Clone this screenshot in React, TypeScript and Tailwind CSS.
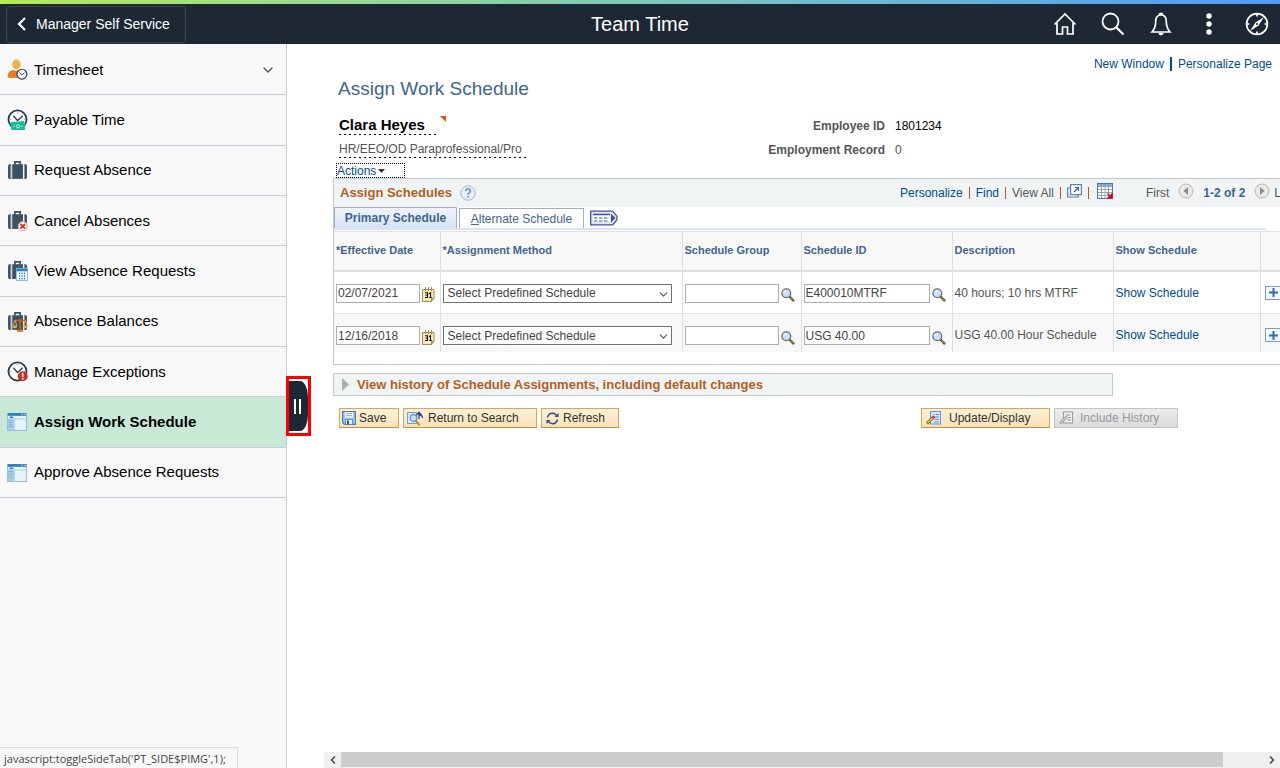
import { useState, type ReactNode } from "react";
import { ChevronDown, ChevronLeft, ChevronRight } from "lucide-react";

const Clock = () => (
  <>
    <circle cx="10" cy="10" r="8.6" fill="#fff" stroke="#2b3e50" strokeWidth="1.7" />
    <path d="M6 6.5l4 4.5 5-4.5" fill="none" stroke="#2b3e50" strokeWidth="1.3" />
    <path d="M10 3v1M3 10h1M16 10h1" stroke="#8b98a5" strokeWidth="1" />
  </>
);

const Suitcase = () => (
  <>
    <path d="M7.5 4.500v-2.700h5v2.700" fill="none" stroke="#3c5064" strokeWidth="1.6" />
    <rect x="5" y="4" width="10.200" height="14" fill="#3c5064" />
    <path d="M4 4v14H2.500Q1 18 1 16.500v-11Q1 4 2.500 4zM16.300 4v14h1.300q1.400 0 1.400-1.500v-11Q19 4 17.600 4z" fill="#3c5064" />
    <path d="M3.500 4.500v13M16.700 4.500v13" stroke="#9aa6b1" strokeWidth=".8" />
  </>
);

const Windowed = () => (
  <>
    <rect x="0" y="2" width="19" height="17" fill="#a9cfe6" />
    <rect x="0" y="2" width="19" height="2.500" fill="#2980b9" />
    <path d="M14 3.200h1M16.500 3.200h1" stroke="#d6e9f5" />
    <rect x="1" y="5" width="17" height="2" fill="#f4fafd" />
    <path d="M2.500 6h3.500" stroke="#2980b9" strokeWidth="1.500" />
    <path d="M1.500 9h4M1.500 11h4M1.500 13h4M1.500 15h4" stroke="#7db6da" strokeWidth=".9" />
    <rect x="7.500" y="8" width="10.500" height="10" fill="#e8f3f9" />
    <path d="M.4 2v16.600h18.200V2" fill="none" stroke="#8dbfdd" strokeWidth=".8" />
  </>
);

const navItems: { label: string; art: ReactNode; expandable?: boolean; active?: boolean }[] = [
  {
    label: "Timesheet",
    expandable: true,
    art: (
      <>
        <ellipse cx="9" cy="5.200" rx="4" ry="4.800" fill="#e9b44c" />
        <path d="M.5 17q0-5.500 5-6.500 3.500 1.500 7 0 3 1 3.500 3v4.500H3.500Q.5 18 .5 17z" fill="#e67e22" />
        <circle cx="14.200" cy="14.500" r="4.700" fill="#fff" stroke="#2b3e50" strokeWidth="1.100" />
        <path d="M11.700 13l2.500 2 2.500-2" fill="none" stroke="#2b3e50" strokeWidth=".9" />
      </>
    ),
  },
  {
    label: "Payable Time",
    art: (
      <>
        <Clock />
        <path d="M3 12.500l13.500-1v2.500h.5v6H4v-5H3z" fill="#1abc9c" />
        <circle cx="10.500" cy="16.500" r="1.500" fill="none" stroke="#c9f3ea" strokeWidth=".9" />
        <path d="M6 16.500h1.500M13.500 16.500H15" stroke="#c9f3ea" />
      </>
    ),
  },
  { label: "Request Absence", art: <Suitcase /> },
  {
    label: "Cancel Absences",
    art: (
      <>
        <Suitcase />
        <circle cx="15" cy="15.500" r="4.300" fill="#fff" stroke="#d9a09a" />
        <path d="M12.800 13.300l4.400 4.400M17.200 13.300l-4.400 4.400" stroke="#c0392b" strokeWidth="1.800" />
      </>
    ),
  },
  {
    label: "View Absence Requests",
    art: (
      <>
        <Suitcase />
        <rect x="9" y="8" width="10.500" height="11.500" fill="#fff" stroke="#8fc1e0" />
        <path d="M9 9.500h10.500" stroke="#2980b9" strokeWidth="2.500" />
        <path d="M12 12v7M14.300 12v7M16.600 12v7" stroke="#2980b9" strokeWidth="1.200" strokeDasharray="1.500 1" />
      </>
    ),
  },
  {
    label: "Absence Balances",
    art: (
      <>
        <Suitcase />
        <path d="M12.500 7.500V19M7.500 9h10M9.500 19h6" stroke="#d35f14" strokeWidth="1.500" />
        <path d="M7.500 9l-2 5h4zM17.500 9l-2 5h4z" fill="none" stroke="#e9b44c" strokeWidth=".8" />
        <path d="M5 14.500h5q-.5 2-2.500 2t-2.500-2zM15 14.500h4.800q-.5 2-2.400 2t-2.400-2z" fill="#e9b44c" />
      </>
    ),
  },
  {
    label: "Manage Exceptions",
    art: (
      <>
        <Clock />
        <circle cx="15" cy="14.500" r="4.800" fill="#c0392b" />
        <path d="M15 11.500v3.700M15 16.300v1.400" stroke="#fff" strokeWidth="1.500" />
      </>
    ),
  },
  { label: "Assign Work Schedule", art: <Windowed />, active: true },
  { label: "Approve Absence Requests", art: <Windowed /> },
];

const rows = [
  { date: "02/07/2021", scheduleId: "E400010MTRF", description: "40 hours; 10 hrs MTRF" },
  { date: "12/16/2018", scheduleId: "USG 40.00", description: "USG 40.00 Hour Schedule" },
];

const underline =
  "bg-[repeating-linear-gradient(90deg,#000_0_2px,transparent_2px_5px)] bg-[length:100%_1px] bg-bottom bg-no-repeat";

const Lookup = ({ label }: { label: string }) => (
  <button aria-label={label} className="mt-[4px] shrink-0">
    <svg width="14" height="14" viewBox="0 0 14 14">
      <path d="M8.500 8.500l4.500 4.700" stroke="#55552a" strokeWidth="2.400" />
      <path d="M9.500 9.300l3 3.200" stroke="#b5b552" strokeWidth=".9" />
      <circle cx="5.300" cy="5.300" r="4.400" fill="#c4e1fb" stroke="#6c6c6c" strokeWidth="1.300" />
      <path d="M3 5q.5-2 2.500-2" fill="none" stroke="#fff" strokeWidth="1.300" />
    </svg>
  </button>
);

const CalendarIcon = () => (
  <svg width="13" height="15" viewBox="0 0 13 15">
    <path d="M.5 2.500h11.500v9l-2.500 3H.5z" fill="#fbe8b8" stroke="#a08a58" />
    <path d="M9.500 14.500v-3H12" fill="#d9b86a" stroke="#a08a58" />
    <path d="M3.500 0v4M6.500 0v4M9.500 0v4" stroke="#a08a58" />
    <path d="M3 5.800h2.500v4.700H3M3.500 8h2M7 6.500l1.500-.7v4.700M7.300 10.500h2.500" fill="none" stroke="#111" strokeWidth="1.100" />
  </svg>
);

const PageArrow = ({ back }: { back?: boolean }) => (
  <svg className="mb-1" width="16" height="16" viewBox="0 0 16 16">
    <circle cx="8" cy="8" r="7" fill="#e9e9e9" stroke="#b9b9b9" />
    <path d={back ? "M10 4v8L5.500 8z" : "M6 4v8l4.500-4z"} fill="#8a8a8a" />
  </svg>
);

const Bar = () => <span className="h-3 w-px bg-[#b9562c]" />;

function ScheduleRow({ row, odd }: { row: (typeof rows)[number]; odd: boolean }) {
  const cell = "border-r border-[#dfdfdf] pt-3 align-top";
  const input = "h-[19px] border border-[#adadad] bg-white px-px text-xs text-[#444]";

  return (
    <tr className={odd ? "h-[38px] bg-[#f8f8f8]" : "h-[43px] border-b border-[#dfdfdf] bg-white"}>
      <td className={cell}>
        <div className="flex gap-0.5 pl-0.5">
          <input aria-label="Effective Date" defaultValue={row.date} className={`${input} w-[84px]`} />
          <button aria-label="Choose a date" className="mt-[3px]">
            <CalendarIcon />
          </button>
        </div>
      </td>
      <td className={cell}>
        <div className="relative ml-0.5 w-[229px]">
          <select
            aria-label="Assignment Method"
            className="block h-[19px] w-full appearance-none border border-[#707070] bg-white pl-1 text-xs text-[#444]"
          >
            <option>Select Predefined Schedule</option>
          </select>
          <ChevronDown className="pointer-events-none absolute right-0.5 top-1 text-[#555]" size={13} strokeWidth={2} />
        </div>
      </td>
      <td className={cell}>
        <div className="flex gap-0.5 pl-0.5">
          <input aria-label="Schedule Group" className={`${input} w-[94px]`} />
          <Lookup label="Look up Schedule Group" />
        </div>
      </td>
      <td className={cell}>
        <div className="flex gap-0.5 pl-0.5">
          <input aria-label="Schedule ID" defaultValue={row.scheduleId} className={`${input} w-[126px]`} />
          <Lookup label="Look up Schedule ID" />
        </div>
      </td>
      <td className={`${cell} pl-0.5 leading-[18px]`}>{row.description}</td>
      <td className={`${cell} pl-0.5 leading-[18px]`}>
        <a href="#" className="text-[#004b91]">Show Schedule</a>
      </td>
      <td className="pt-3.5 pl-1 align-top">
        <button aria-label="Add a new row" className="flex h-3.5 w-[18px] items-center justify-center border border-[#7f9db5] bg-[#f3f8fc]">
          <svg width="9" height="9" viewBox="0 0 9 9">
            <path d="M4.500 0v9M0 4.500h9" stroke="#2f6db0" strokeWidth="2" />
          </svg>
        </button>
      </td>
    </tr>
  );
}

function Header() {
  return (
    <header className="shrink-0 bg-[#1e2834] text-white">
      <div className="h-1 bg-linear-to-r from-[#b6ea4f] to-[#4f9bf8]" />
      <div className="grid h-10 grid-cols-3 items-center">
        <button className="ml-1.5 flex h-[37px] w-[180px] items-center gap-[9px] rounded border border-[#3d4650] pl-2.5 text-sm">
          <svg width="10" height="14" viewBox="0 0 10 14">
            <path d="M8 1L2 7l6 6" fill="none" stroke="#fff" strokeWidth="2.200" />
          </svg>
          Manager Self Service
        </button>
        <h1 className="text-center text-xl">Team Time</h1>
        <nav className="flex items-center justify-end gap-6 pr-[11px]">
          <button aria-label="Home">
            <svg width="24" height="24" viewBox="0 0 24 24" fill="none" stroke="#fff" strokeWidth="1.700">
              <path d="M1.500 12.500L12 2l10.500 10.500M4 11v11h5.500v-7h5v7H20V11" />
            </svg>
          </button>
          <button aria-label="Search">
            <svg width="24" height="24" viewBox="0 0 24 24" fill="none" stroke="#fff" strokeWidth="1.800">
              <circle cx="9.500" cy="9.500" r="8" />
              <path d="M15.200 15.200l7.300 7.300" strokeWidth="2.200" />
            </svg>
          </button>
          <button aria-label="Notifications">
            <svg width="24" height="24" viewBox="0 0 24 24" fill="none" stroke="#fff" strokeWidth="1.700">
              <path d="M12 3c-4 0-5.300 3-5.300 6.500 0 5.500-1 7.500-3.700 10.500h18c-2.700-3-3.700-5-3.700-10.500C17.300 6 16 3 12 3z" />
              <path d="M10 2.500q2-2.500 4 0M10 21q2 3 4 0" fill="#fff" />
            </svg>
          </button>
          <button aria-label="Actions">
            <svg width="24" height="24" viewBox="0 0 24 24" fill="#fff">
              <circle cx="12" cy="4" r="2.700" />
              <circle cx="12" cy="12" r="2.700" />
              <circle cx="12" cy="20" r="2.700" />
            </svg>
          </button>
          <button aria-label="NavBar">
            <svg width="24" height="24" viewBox="0 0 24 24" fill="none" stroke="#fff" strokeWidth="1.700">
              <circle cx="12" cy="12" r="10.400" />
              <path d="M12 2v2.500M12 19.500V22M2 12h2.500M19.500 12H22" />
              <path d="M19 5l-5.500 8.500L5 19l5.500-8.500z" fill="#fff" stroke="none" />
              <circle cx="12" cy="12" r="1" fill="#1e2834" stroke="none" />
            </svg>
          </button>
        </nav>
      </div>
    </header>
  );
}

function Sidebar() {
  return (
    <aside className="w-[287px] shrink-0 border-r border-[#c8ced5] bg-[#f8f8f8] pt-px">
      <ul className="flex h-[453px] flex-col">
        {navItems.map(({ label, art, expandable, active }) => (
          <li key={label} className={`flex-1 border-b border-[#c8ced5] ${active ? "bg-[#c8e9d6] font-bold" : ""}`}>
            <a href="#" className="flex h-full items-center gap-1.5 pl-[7px] text-[15px] text-black">
              <svg width="21" height="21" viewBox="0 0 20 20">{art}</svg>
              {label}
              {expandable && <ChevronDown className="mr-2.5 ml-auto text-[#555]" size={16} strokeWidth={2} />}
            </a>
          </li>
        ))}
      </ul>
    </aside>
  );
}

function Person() {
  return (
    <section className="flex pl-1.5 pt-[15px]">
      <div className="w-[421px]">
        <h3 className="flex h-[19px] items-start text-[15px] leading-[18px] font-bold text-black">
          <span className={`h-[19px] w-[97px] ${underline}`}>Clara Heyes</span>
          <svg className="ml-1" width="6" height="6" viewBox="0 0 6 6">
            <path d="M0 0h6v6z" fill="#e8500a" />
          </svg>
        </h3>
        <p className={`mt-1.5 h-[17px] w-[187px] leading-4 ${underline}`}>HR/EEO/OD Paraprofessional/Pro</p>
        <button className="-ml-[3px] mt-[5px] flex h-[15px] w-[69px] items-center gap-0.5 border border-dotted border-black text-[#004b91]">
          Actions
          <svg width="7" height="4" viewBox="0 0 7 4">
            <path d="M0 0h7L3.500 4z" fill="#333" />
          </svg>
        </button>
      </div>
      <dl className="grid h-12 grid-cols-[125px_auto] content-start gap-x-2.5 gap-y-1 leading-5">
        <dt className="text-right font-bold">Employee ID</dt>
        <dd className="text-black">1801234</dd>
        <dt className="text-right font-bold">Employment Record</dt>
        <dd>0</dd>
      </dl>
    </section>
  );
}

function Schedules() {
  const th = "border-r border-[#dfdfdf] pl-0.5 text-left text-[11px] font-bold";

  return (
    <section className="h-[187px] border border-[#c3c8d0]">
      <div className="grid h-7 grid-cols-[566px_246px_auto] items-center bg-[#f0f4f5]">
        <h3 className="flex items-center gap-2 pl-1.5 text-[13px] font-bold text-[#b35f1e]">
          Assign Schedules
          <button aria-label="Help">
            <svg width="16" height="16" viewBox="0 0 16 16">
              <circle cx="8" cy="8" r="7.300" fill="#e6edf5" stroke="#a9b9cc" />
              <path d="M5.700 6q.3-2.300 2.400-2.300T10.400 6q0 1-1.200 1.800Q8 8.500 8 9.800M8 11v1.800" fill="none" stroke="#6d96cc" strokeWidth="1.600" />
            </svg>
          </button>
        </h3>
        <div className="flex items-center gap-1.5">
          <a href="#" className="text-[#004b91]">Personalize</a>
          <Bar />
          <a href="#" className="text-[#004b91]">Find</a>
          <Bar />
          <span>View All</span>
          <Bar />
          <button aria-label="Zoom grid" className="pb-1">
            <svg width="15" height="14" viewBox="0 0 15 14">
              <path d="M3 4H.7v9h10.500v-2" fill="none" stroke="#5c7fa8" strokeWidth="1.200" />
              <rect x="3.600" y=".6" width="10.800" height="10" fill="#fff" stroke="#5c7fa8" strokeWidth="1.200" />
              <path d="M7 8l4-4M8 3.500h3.500V7" fill="none" stroke="#3d618e" strokeWidth="1.200" />
            </svg>
          </button>
          <Bar />
          <button aria-label="Download" className="ml-0.5 pb-1">
            <svg width="16" height="16" viewBox="0 0 16 16">
              <rect x=".5" y=".5" width="15" height="15" fill="#fff" stroke="#4c76b8" />
              <path d="M1 2.500h14" stroke="#8cacdb" strokeWidth="3" />
              <path d="M1 6.500h14M1 9.500h14M1 12.500h14M4.500 1v14M8 1v14M11.500 1v14" stroke="#8e9db3" strokeWidth=".9" />
              <path d="M10.500 10.500l4 4M15 11v4h-4z" fill="#c8102e" stroke="#c8102e" strokeWidth="1.500" />
            </svg>
          </button>
        </div>
        <div className="flex items-center gap-[9px]">
          <span>First</span>
          <PageArrow back />
          <b className="text-[#41658d]">1-2 of 2</b>
          <span className="flex items-center gap-1">
            <PageArrow />
            Last
          </span>
        </div>
      </div>

      <div className="mr-[66px] flex h-[23px] items-end gap-0.5 border-b-2 border-[#d8e4f2] text-[#41658d]">
        <button className="h-[21px] w-[123px] border border-b-0 border-[#a3aec4] bg-linear-to-b from-[#eff4fb] to-[#d6e3f3] font-bold">
          Primary Schedule
        </button>
        <button className="h-5 w-[125px] border border-b-0 border-[#a3aec4] bg-white">
          <span className="underline">A</span>lternate Schedule
        </button>
        <button aria-label="Show all columns" className="mb-0.5 ml-1">
          <svg width="28" height="16" viewBox="0 0 28 16">
            <path d="M.7 1.200h22l4.300 5v3.500l-4.300 5.100H.7z" fill="#dbe5f5" stroke="#42578a" strokeWidth="1.300" />
            <rect x="3" y="4" width="17" height="8" fill="#fff" />
            <path d="M3 4.500h17" stroke="#42578a" strokeWidth="1.500" />
            <path d="M4 8h15M4 11h15" stroke="#42578a" strokeWidth="1.200" strokeDasharray="3.500 1.500" />
            <path d="M21 3.500v9l4.500-4.500z" fill="#42578a" />
          </svg>
        </button>
      </div>

      <table className="mt-px w-full table-fixed border-collapse">
        <colgroup>
          <col className="w-[106px]" />
          <col className="w-[242px]" />
          <col className="w-[119px]" />
          <col className="w-[151px]" />
          <col className="w-[161px]" />
          <col className="w-[147px]" />
          <col />
        </colgroup>
        <thead>
          <tr className="h-[39px] border-t border-b-2 border-[#dfdfdf] bg-[#f8f8f8] text-[#41658d]">
            <th className={th}>*Effective Date</th>
            <th className={th}>*Assignment Method</th>
            <th className={th}>Schedule Group</th>
            <th className={th}>Schedule ID</th>
            <th className={th}>Description</th>
            <th className={th}>Show Schedule</th>
            <th />
          </tr>
        </thead>
        <tbody>
          {rows.map((row, i) => (
            <ScheduleRow key={row.date} row={row} odd={i % 2 === 1} />
          ))}
        </tbody>
      </table>
    </section>
  );
}

const action =
  "flex h-5 items-center border border-[#dba652] border-b-[#c98f35] bg-linear-to-b from-[#fdf0d8] to-[#fae2b8] text-[#333]";

function Toolbar() {
  return (
    <div className="mt-3 flex gap-1 pl-1.5">
      <button className={`${action} w-[60px] gap-[3px] pl-0.5`}>
        <svg width="14" height="14" viewBox="0 0 14 14">
          <path d="M.6.6h12.800v12.800H2.500L.6 11.500z" fill="#a9c6f3" stroke="#4a78c4" strokeWidth="1.200" />
          <rect x="3" y="1" width="8" height="5.500" fill="#fff" />
          <path d="M4 2.700h6M4 4.700h6" stroke="#6f9be0" strokeWidth=".9" />
          <rect x="3.500" y="8.500" width="7" height="5" fill="#eaf1fb" stroke="#4a78c4" strokeWidth=".8" />
          <rect x="5" y="9.500" width="2" height="4" fill="#2f5597" />
        </svg>
        Save
      </button>
      <button className={`${action} w-[134px] gap-1 pl-[3px]`}>
        <svg width="17" height="15" viewBox="0 0 17 15">
          <path d="M.5 1.500h9v11h-9z" fill="#dce9fa" stroke="#6f9be0" />
          <circle cx="6.500" cy="7" r="3.300" fill="#bfe0fb" stroke="#7c8fa5" strokeWidth="1.200" />
          <path d="M8.500 9.500l4 4.500" stroke="#a39a2a" strokeWidth="2" />
          <path d="M15.500 7q0-3-3.500-3M12 8V1.500M9.500 4L12 1.200 14.500 4" fill="none" stroke="#274b8a" strokeWidth="1.300" />
        </svg>
        Return to Search
      </button>
      <button className={`${action} w-[78px] gap-1 pl-1`}>
        <svg width="13" height="13" viewBox="0 0 13 13" fill="none" stroke="#274b8a" strokeWidth="1.400">
          <path d="M1.500 5.500Q2.500 1.300 6.500 1.300q2.500 0 4 2M11.500 7.500q-1 4.200-5 4.200-2.500 0-4-2" />
          <path d="M12.500 1v4h-4zM.5 12V8h4z" fill="#274b8a" stroke="none" />
        </svg>
        Refresh
      </button>
      <button className={`${action} ml-[298px] w-[129px] gap-2 pl-1`}>
        <svg width="15" height="14" viewBox="0 0 15 14">
          <rect x="4.500" y=".5" width="10" height="12.500" fill="#d7e6fb" stroke="#5f92e0" />
          <path d="M7 3.500h1.500M10 3.500h3M9 6h4M9 8.500h4M8 11h5" stroke="#5f92e0" />
          <path d="M1 12.500L7.500 6" stroke="#6b5a10" strokeWidth="3" />
          <path d="M1.500 12L7 6.500" stroke="#f0d040" strokeWidth="1.500" />
          <path d="M6.800 5.200l1.800 1.800" stroke="#d22" strokeWidth="2" />
        </svg>
        Update/Display
      </button>
      <button disabled className="flex h-5 w-[124px] items-center gap-1.5 border border-[#c4c4c4] bg-linear-to-b from-[#ececec] to-[#dcdcdc] pl-1 text-[#999]">
        <svg width="15" height="14" viewBox="0 0 15 14">
          <rect x="4.500" y="1" width="9" height="11" fill="#eee" stroke="#9a9a9a" />
          <path d="M7 4h4.500M9 6.500h3M8 9h4" stroke="#9a9a9a" />
          <path d="M1 12.500l7-7" stroke="#9a9a9a" strokeWidth="2.500" />
          <path d="M1.500 12L7.500 6" stroke="#eee" />
        </svg>
        Include History
      </button>
    </div>
  );
}

export default function App() {
  const [open, setOpen] = useState(true);

  return (
    <div className="flex h-screen flex-col overflow-hidden bg-white font-['Liberation_Sans',Arial,sans-serif] text-xs text-[#555]">
      <Header />
      <div className="relative flex min-h-0 flex-1">
        {open && <Sidebar />}
        <div className="relative flex min-w-0 flex-1 flex-col">
          <button
            aria-label="Toggle side panel"
            onClick={() => setOpen(!open)}
            className="absolute top-[332px] -left-px z-10 h-[60px] w-[25px] border-3 border-[#f00] bg-white py-0.5"
          >
            <span className="flex h-[50px] items-center justify-center gap-[3px] bg-[#1e2834] pr-0.5 [border-radius:0_8px_8px_0/0_16px_16px_0]">
              <span className="h-[15px] w-0.5 bg-white" />
              <span className="h-[15px] w-0.5 bg-white" />
            </span>
          </button>

          <main className="flex-1 overflow-hidden pl-[46px]">
            <div className="flex items-center justify-end gap-1.5 pt-3 pr-2 text-[#004b91]">
              <a href="#">New Window</a>
              <span className="h-3.5 w-0.5 bg-[#004b91]" />
              <a href="#">Personalize Page</a>
            </div>
            <h2 className="pt-[5px] pl-[5px] text-[19px] leading-6 text-[#41658d]">Assign Work Schedule</h2>
            <div className="w-[1000px]">
              <Person />
              <Schedules />
              <button className="mt-2 flex h-[23px] w-[780px] items-center gap-2 border border-[#c3c8d0] bg-[#f0f4f5] pl-2 text-[13px] font-bold text-[#b35f1e]">
                <svg width="7" height="13" viewBox="0 0 7 13">
                  <path d="M0 0l7 6.500L0 13z" fill="#adadad" />
                </svg>
                View history of Schedule Assignments, including default changes
              </button>
              <Toolbar />
            </div>
          </main>

          <div className="ml-[37px] flex h-4 shrink-0 bg-[#f0f0f0] text-[#505050]">
            <button aria-label="Scroll left" className="flex w-[17px] items-center justify-center">
              <ChevronLeft size={12} strokeWidth={3.5} />
            </button>
            <div className="mr-10 h-[15px] flex-1 bg-[#cdcdcd]" />
            <button aria-label="Scroll right" className="flex w-[17px] items-center justify-center">
              <ChevronRight size={12} strokeWidth={3.5} />
            </button>
          </div>
        </div>

        <div className="absolute bottom-0 left-0 h-[21px] w-[238px] border-t border-r border-[#dcdcdc] bg-[#f8f8f8] pl-1 font-['Open_Sans','Noto_Sans',sans-serif] text-[11px] leading-[22px] text-[#444]">
          javascript:toggleSideTab('PT_SIDE$PIMG',1);
        </div>
      </div>
    </div>
  );
}
